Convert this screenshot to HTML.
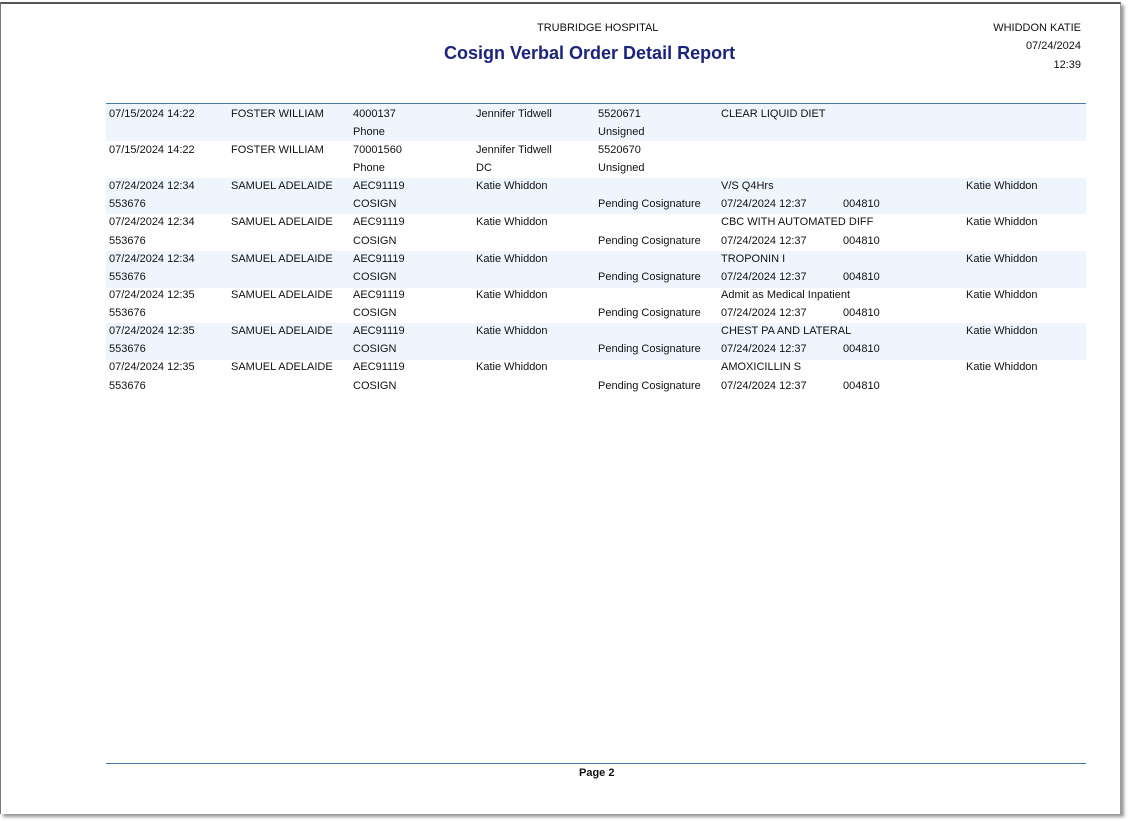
<!DOCTYPE html>
<html><head><style>
body{margin:0;width:1128px;height:821px;background:#fff;position:relative;overflow:hidden;font-family:"Liberation Sans",Arial,sans-serif;color:#111;}
.page{position:absolute;left:0;top:2px;width:1121px;height:812px;border-top:2px solid #555;border-left:1px solid #777;border-right:1px solid #999;box-shadow:3px 3px 3px #999;background:#fff;box-sizing:border-box}
.t{position:absolute;font-size:11px;white-space:nowrap;line-height:13px}
.band{position:absolute;left:106px;width:980px;height:36px;background:#eef5fd}
.hr{position:absolute;left:106px;width:980px;height:1px;background:#4a7bab}
</style></head><body>
<div class="page"></div>
<div class="t" style="left:537px;top:22px">TRUBRIDGE HOSPITAL</div>
<div class="t" style="left:444px;top:42px;font-size:18px;line-height:22px;font-weight:bold;color:#1a237e">Cosign Verbal Order Detail Report</div>
<div class="t" style="right:47px;top:22px">WHIDDON KATIE</div>
<div class="t" style="right:47px;top:40px">07/24/2024</div>
<div class="t" style="right:47px;top:59px">12:39</div>
<div class="hr" style="top:103px"></div>
<div class="band" style="top:104px;height:37px"></div>
<div class="band" style="top:178px"></div>
<div class="band" style="top:251px;height:37px"></div>
<div class="band" style="top:323px;height:37px"></div>
<div id="rows"></div>
<div class="hr" style="top:763px"></div>
<div class="t" style="left:579px;top:767px;font-weight:bold">Page 2</div>
<script></script>
<div class="t" style="left:109px;top:108px">07/15/2024 14:22</div><div class="t" style="left:231px;top:108px">FOSTER WILLIAM</div><div class="t" style="left:353px;top:108px">4000137</div><div class="t" style="left:476px;top:108px">Jennifer Tidwell</div><div class="t" style="left:598px;top:108px">5520671</div><div class="t" style="left:721px;top:108px">CLEAR LIQUID DIET</div>
<div class="t" style="left:353px;top:126px">Phone</div><div class="t" style="left:598px;top:126px">Unsigned</div>
<div class="t" style="left:109px;top:144px">07/15/2024 14:22</div><div class="t" style="left:231px;top:144px">FOSTER WILLIAM</div><div class="t" style="left:353px;top:144px">70001560</div><div class="t" style="left:476px;top:144px">Jennifer Tidwell</div><div class="t" style="left:598px;top:144px">5520670</div>
<div class="t" style="left:353px;top:162px">Phone</div><div class="t" style="left:476px;top:162px">DC</div><div class="t" style="left:598px;top:162px">Unsigned</div>

<div class="t" style="left:109px;top:180px">07/24/2024 12:34</div><div class="t" style="left:231px;top:180px">SAMUEL ADELAIDE</div><div class="t" style="left:353px;top:180px">AEC91119</div><div class="t" style="left:476px;top:180px">Katie Whiddon</div><div class="t" style="left:721px;top:180px">V/S Q4Hrs</div><div class="t" style="left:966px;top:180px">Katie Whiddon</div>
<div class="t" style="left:109px;top:198px">553676</div><div class="t" style="left:353px;top:198px">COSIGN</div><div class="t" style="left:598px;top:198px">Pending Cosignature</div><div class="t" style="left:721px;top:198px">07/24/2024 12:37</div><div class="t" style="left:843px;top:198px">004810</div>

<div class="t" style="left:109px;top:216px">07/24/2024 12:34</div><div class="t" style="left:231px;top:216px">SAMUEL ADELAIDE</div><div class="t" style="left:353px;top:216px">AEC91119</div><div class="t" style="left:476px;top:216px">Katie Whiddon</div><div class="t" style="left:721px;top:216px">CBC WITH AUTOMATED DIFF</div><div class="t" style="left:966px;top:216px">Katie Whiddon</div>
<div class="t" style="left:109px;top:235px">553676</div><div class="t" style="left:353px;top:235px">COSIGN</div><div class="t" style="left:598px;top:235px">Pending Cosignature</div><div class="t" style="left:721px;top:235px">07/24/2024 12:37</div><div class="t" style="left:843px;top:235px">004810</div>

<div class="t" style="left:109px;top:253px">07/24/2024 12:34</div><div class="t" style="left:231px;top:253px">SAMUEL ADELAIDE</div><div class="t" style="left:353px;top:253px">AEC91119</div><div class="t" style="left:476px;top:253px">Katie Whiddon</div><div class="t" style="left:721px;top:253px">TROPONIN I</div><div class="t" style="left:966px;top:253px">Katie Whiddon</div>
<div class="t" style="left:109px;top:271px">553676</div><div class="t" style="left:353px;top:271px">COSIGN</div><div class="t" style="left:598px;top:271px">Pending Cosignature</div><div class="t" style="left:721px;top:271px">07/24/2024 12:37</div><div class="t" style="left:843px;top:271px">004810</div>

<div class="t" style="left:109px;top:289px">07/24/2024 12:35</div><div class="t" style="left:231px;top:289px">SAMUEL ADELAIDE</div><div class="t" style="left:353px;top:289px">AEC91119</div><div class="t" style="left:476px;top:289px">Katie Whiddon</div><div class="t" style="left:721px;top:289px">Admit as Medical Inpatient</div><div class="t" style="left:966px;top:289px">Katie Whiddon</div>
<div class="t" style="left:109px;top:307px">553676</div><div class="t" style="left:353px;top:307px">COSIGN</div><div class="t" style="left:598px;top:307px">Pending Cosignature</div><div class="t" style="left:721px;top:307px">07/24/2024 12:37</div><div class="t" style="left:843px;top:307px">004810</div>

<div class="t" style="left:109px;top:325px">07/24/2024 12:35</div><div class="t" style="left:231px;top:325px">SAMUEL ADELAIDE</div><div class="t" style="left:353px;top:325px">AEC91119</div><div class="t" style="left:476px;top:325px">Katie Whiddon</div><div class="t" style="left:721px;top:325px">CHEST PA AND LATERAL</div><div class="t" style="left:966px;top:325px">Katie Whiddon</div>
<div class="t" style="left:109px;top:343px">553676</div><div class="t" style="left:353px;top:343px">COSIGN</div><div class="t" style="left:598px;top:343px">Pending Cosignature</div><div class="t" style="left:721px;top:343px">07/24/2024 12:37</div><div class="t" style="left:843px;top:343px">004810</div>

<div class="t" style="left:109px;top:361px">07/24/2024 12:35</div><div class="t" style="left:231px;top:361px">SAMUEL ADELAIDE</div><div class="t" style="left:353px;top:361px">AEC91119</div><div class="t" style="left:476px;top:361px">Katie Whiddon</div><div class="t" style="left:721px;top:361px">AMOXICILLIN S</div><div class="t" style="left:966px;top:361px">Katie Whiddon</div>
<div class="t" style="left:109px;top:380px">553676</div><div class="t" style="left:353px;top:380px">COSIGN</div><div class="t" style="left:598px;top:380px">Pending Cosignature</div><div class="t" style="left:721px;top:380px">07/24/2024 12:37</div><div class="t" style="left:843px;top:380px">004810</div>
</body></html>
